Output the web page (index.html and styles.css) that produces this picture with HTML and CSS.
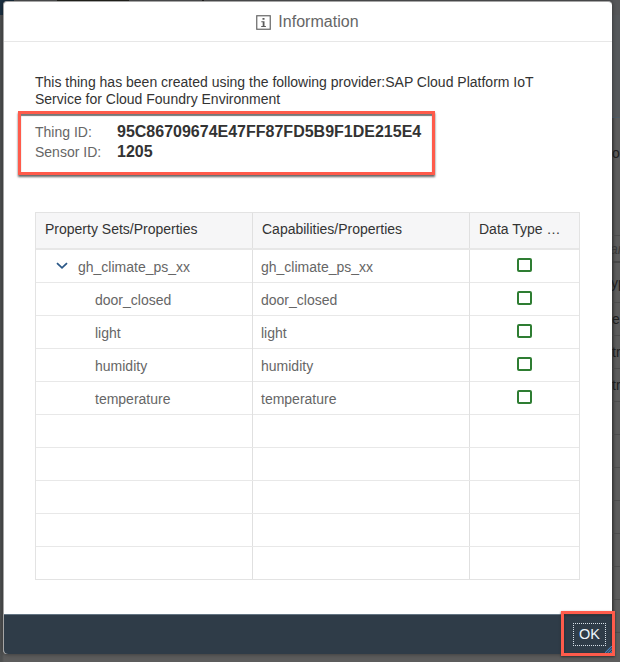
FILE: index.html
```html
<!DOCTYPE html>
<html lang="en">
<head>
<meta charset="utf-8">
<title>Information</title>
<link rel="stylesheet" href="styles.css">
</head>
<body>
<div class="page">
  <div class="page-top"><span class="brand"></span><span class="strip"></span><span class="dots"></span></div>
  <div class="page-side">
    <div class="side-head"></div>
    <div class="side-row side-tall">o</div>
    <div class="side-row side-input">ar</div>
    <div class="side-row side-title">yp</div>
    <div class="side-row">e</div>
    <div class="side-row">tr</div>
    <div class="side-row">tr</div>
    <div class="side-row"></div>
    <div class="side-row"></div>
    <div class="side-row"></div>
    <div class="side-row"></div>
    <div class="side-row"></div>
    <div class="side-row"></div>
    <div class="side-row"></div>
  </div>
</div>
<section class="dialog">
  <header class="dialog-header">
    <svg class="info-icon" width="15" height="15" viewBox="0 0 15 15"><rect x=".75" y=".75" width="13.5" height="13.5" fill="none" stroke="#666" stroke-width="1.2"/><path d="M6.5 3h2v1.8h-2zM5.3 6.2h3.2v4.7h1.4V12H5.2v-1.1h1.5V7.3H5.3z" fill="#5c5c5c"/></svg>
    <h1>Information</h1>
  </header>
  <div class="dialog-body">
    <p class="message">This thing has been created using the following provider:SAP Cloud Platform IoT<br>Service for Cloud Foundry Environment</p>
    <div class="ids">
      <span class="label">Thing ID:</span><strong>95C86709674E47FF87FD5B9F1DE215E4</strong>
      <span class="label">Sensor ID:</span><strong>1205</strong>
    </div>
    <div class="table">
      <div class="row head"><div>Property Sets/Properties</div><div>Capabilities/Properties</div><div>Data Type …</div></div>
      <div class="row"><div class="parent"><svg class="chevron" width="12" height="8" viewBox="0 0 12 8"><path d="M1 1.2l5 4.6 5-4.6" fill="none" stroke="#2b5887" stroke-width="1.8"/></svg>gh_climate_ps_xx</div><div>gh_climate_ps_xx</div><div><i class="box"></i></div></div>
      <div class="row"><div>door_closed</div><div>door_closed</div><div><i class="box"></i></div></div>
      <div class="row"><div>light</div><div>light</div><div><i class="box"></i></div></div>
      <div class="row"><div>humidity</div><div>humidity</div><div><i class="box"></i></div></div>
      <div class="row"><div>temperature</div><div>temperature</div><div><i class="box"></i></div></div>
      <div class="row"><div></div><div></div><div></div></div>
      <div class="row"><div></div><div></div><div></div></div>
      <div class="row"><div></div><div></div><div></div></div>
      <div class="row"><div></div><div></div><div></div></div>
      <div class="row"><div></div><div></div><div></div></div>
    </div>
  </div>
  <footer class="dialog-footer">
    <div class="ok-frame"><button class="ok">OK</button><svg class="grip" width="7" height="7" viewBox="0 0 8 8"><path d="M0 8L8 0M3 8l5-5M6 8l2-2" stroke="#4a83bd" stroke-width="1.2"/></svg></div>
  </footer>
</section>
</body>
</html>
```
FILE: styles.css
```css
* { box-sizing: border-box; }
body {
  margin: 0;
  width: 620px;
  height: 662px;
  overflow: hidden;
  position: relative;
  background: #5c5c5c;
  font-family: "Liberation Sans", Arial, sans-serif;
  font-size: 14px;
}
.page { height: 662px; background: linear-gradient(90deg, #4e5051 0 2px, #5c5c5c 4px); }
.page-top { display: flex; height: 15px; background: #565759; }
.brand { width: 14px; background: #1c3143; }
.strip { width: 72px; margin-left: 43px; height: 2px; background: #25251f; }
.dots { width: 2px; margin-left: 73px; height: 2px; background: #222; }
.page-side { width: 8px; margin-left: 612px; overflow: hidden; color: #202020; box-shadow: inset 2px 0 2px #484848; }
.side-head { height: 103px; background: #56595c; border-bottom: 1px solid #4d5c68; }
.side-row { height: 33px; line-height: 33px; border-bottom: 1px solid #4e4e4e; white-space: nowrap; }
.side-tall { height: 118px; line-height: 70px; }
.side-input { height: 27px; line-height: 26px; font-style: italic; color: #3b3b3b; border-bottom: 2px solid #474747; text-indent: -2px; }
.side-title { height: 40px; line-height: 40px; text-indent: -1px; }
.dialog {
  position: absolute;
  left: 3px;
  top: 1px;
  width: 609px;
  height: 653px;
  display: flex;
  flex-direction: column;
  background: #fff;
  border: 1px solid #a5a5a5;
  border-width: 1px 0 0 1px;
  border-radius: 4px;
  box-shadow: 0 0 4px rgba(0, 0, 0, .45);
}
.dialog-header {
  height: 40px;
  flex: none;
  display: flex;
  justify-content: center;
  padding-right: 1px;
  border-bottom: 1px solid #e7e7e7;
}
.info-icon { margin: 13px 7px 0 0; }
h1 { margin: 0; font-size: 16px; line-height: 40px; font-weight: 400; color: #666; letter-spacing: .04px; }
.dialog-body { flex: 1; padding: 32px 32px 0 31px; }
.message { margin: 0 0 4px; line-height: 16.5px; color: #333; white-space: nowrap; }
.ids {
  display: grid;
  grid-template-columns: 82px 1fr;
  grid-template-rows: 20px 20px;
  width: 417px;
  height: 64px;
  margin-left: -17px;
  padding: 8px 0 0 14px;
  border: 3px solid #ff5b4b;
  box-shadow: 0 2px 2px #666, inset 0 2px 1px #777;
  line-height: 20px;
  color: #666;
}
.ids strong { font-size: 16px; color: #333; line-height: 19px; }
.table {
  width: 545px;
  height: 368px;
  margin-top: 37px;
  border: 1px solid #e3e3e3;
  color: #666;
}
.row { display: grid; grid-template-columns: 217px 217px 109px; height: 33px; border-bottom: 1px solid #e8e8e8; }
.row:last-child { height: 32px; border-bottom: 0; }
.row > div { padding-left: 8px; line-height: 34px; border-right: 1px solid #e0e0e0; }
.row > div:first-child { padding-left: 59px; }
.row > div:last-child { border-right: 0; padding: 8px 0 0 47px; }
.row > .parent:first-child { padding-left: 20px; display: flex; }
.chevron { margin: 12px 10px 0 0; }
.row.head { height: 37px; background: #f6f6f7; color: #333; border-bottom: 2px solid #e7e7e7; }
.row.head > div, .row.head > div:first-child, .row.head > div:last-child { padding: 0 0 0 9px; line-height: 33px; }
.box { display: block; width: 15px; height: 14px; border: 2px solid #2e7d32; border-radius: 2px; }
.dialog-footer {
  height: 40px;
  flex: none;
  background: #2f3c48;
  border-top: 1px solid #637482;
  border-radius: 0 0 4px 4px;
}
.ok-frame {
  position: absolute;
  left: 557px;
  top: 609px;
  width: 54px;
  height: 45px;
  border: 3px solid #ff5b4b;
  box-shadow: 0 1px 2px #333, inset 0 1px 2px #222;
  padding: 9px 0 0 9px;
}
.ok {
  display: block;
  width: 33px;
  height: 23px;
  padding: 0;
  border: 1px dotted #d7e0e8;
  background: none;
  color: #eef6fc;
  font: 14.5px/21px "Liberation Sans", Arial, sans-serif;
}
.grip { position: absolute; right: 0; bottom: 0; }
```
